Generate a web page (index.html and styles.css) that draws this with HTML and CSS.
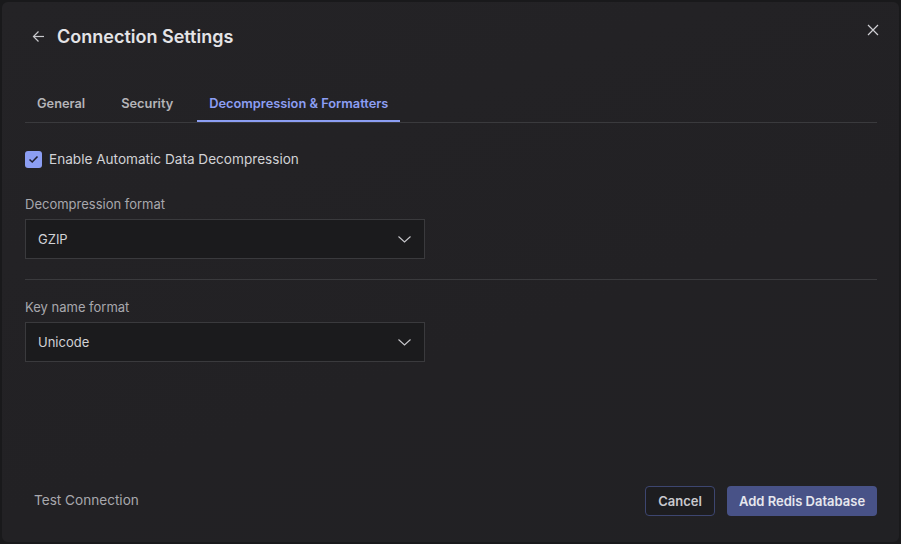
FILE: index.html
```html
<!DOCTYPE html>
<html lang="en">
<head>
    <meta charset="UTF-8">
    <meta name="viewport" content="width=device-width, initial-scale=1.0">
    <title>Connection Settings</title>
    <link rel="stylesheet" href="styles.css">
</head>
<body>
    <div class="panel">
        <!-- Header -->
        <div class="panel-header">
            <button class="icon-btn back-btn" aria-label="Back">
                <svg width="13" height="13" viewBox="0 0 13 13" fill="none" stroke="#c8c8cc" stroke-width="1.2">
                    <path d="M12 6.5H1.5"/>
                    <path d="M6.5 1.5L1.5 6.5L6.5 11.5"/>
                </svg>
            </button>
            <h1 class="title">Connection Settings</h1>
            <button class="icon-btn close-btn" aria-label="Close">
                <svg width="12" height="12" viewBox="0 0 12 12" fill="none" stroke="#d0d0d4" stroke-width="1.2">
                    <path d="M1 1L11 11M11 1L1 11"/>
                </svg>
            </button>
        </div>

        <!-- Tabs -->
        <div class="tabs">
            <a href="#" class="tab">General</a>
            <a href="#" class="tab">Security</a>
            <a href="#" class="tab active">Decompression &amp; Formatters</a>
        </div>

        <!-- Content -->
        <div class="panel-body">
            <label class="checkbox-row">
                <span class="checkbox">
                    <svg width="11" height="9" viewBox="0 0 11 9" fill="none" stroke="#1f2030" stroke-width="1.6">
                        <path d="M1.5 4.5L4.2 7L9.5 1.5"/>
                    </svg>
                </span>
                Enable Automatic Data Decompression
            </label>

            <div class="field">
                <div class="field-label">Decompression format</div>
                <div class="select">
                    <span>GZIP</span>
                    <svg class="chevron" width="13" height="7" viewBox="0 0 13 7" fill="none" stroke="#c8c8cc" stroke-width="1.1">
                        <path d="M0.5 0.5L6.5 6L12.5 0.5"/>
                    </svg>
                </div>
            </div>

            <div class="divider"></div>

            <div class="field">
                <div class="field-label">Key name format</div>
                <div class="select">
                    <span>Unicode</span>
                    <svg class="chevron" width="13" height="7" viewBox="0 0 13 7" fill="none" stroke="#c8c8cc" stroke-width="1.1">
                        <path d="M0.5 0.5L6.5 6L12.5 0.5"/>
                    </svg>
                </div>
            </div>
        </div>

        <!-- Footer -->
        <div class="panel-footer">
            <button class="link-btn">Test Connection</button>
            <div class="actions">
                <button class="btn btn-secondary">Cancel</button>
                <button class="btn btn-primary">Add Redis Database</button>
            </div>
        </div>
    </div>
</body>
</html>
```

FILE: styles.css
```css
:root {
    --page-bg: #19191b;
    --panel-bg: #232225;
    --text-primary: #e4e4e7;
    --text-body: #d2d2d6;
    --text-secondary: #a8a8ad;
    --accent: #8c9ef3;
    --border: #3a3a3d;
    --input-bg: #1b1b1d;
    --primary-btn: #485287;
}

* {
    box-sizing: border-box;
}

body {
    margin: 0;
    height: 100vh;
    background-color: var(--page-bg);
    font-family: Inter, "Noto Sans", sans-serif;
    color: var(--text-primary);
    padding: 2px;
}

.panel {
    height: 100%;
    background: linear-gradient(160deg, #242326 0%, #222124 60%, #212124 100%);
    border-radius: 6px;
    display: flex;
    flex-direction: column;
    padding: 23px 22px 26px 23px;
}

/* Header */
.panel-header {
    display: flex;
    align-items: center;
    height: 24px;
}

.icon-btn {
    background: none;
    border: none;
    padding: 0;
    cursor: pointer;
    display: flex;
    align-items: center;
}

.back-btn {
    margin-left: 7px;
    margin-right: 12px;
    margin-top: -2px;
}

.title {
    margin: 0;
    font-size: 18px;
    font-weight: 600;
    line-height: 24px;
    color: var(--text-primary);
    flex: 1;
}

.close-btn {
    align-self: flex-start;
    margin-top: -1px;
    margin-right: -2px;
}

/* Tabs */
.tabs {
    display: flex;
    gap: 12px;
    margin-top: 39px;
    border-bottom: 1px solid var(--border);
}

.tab {
    padding: 7px 12px;
    font-size: 12.8px;
    font-weight: 600;
    line-height: 18px;
    color: #b4b4b8;
    text-decoration: none;
    border-bottom: 2px solid transparent;
}

.tab.active {
    color: var(--accent);
    border-bottom-color: var(--accent);
}

/* Body */
.panel-body {
    flex: 1;
}

.checkbox-row {
    display: flex;
    align-items: center;
    gap: 7px;
    margin-top: 28px;
    font-size: 13.6px;
    line-height: 17px;
    color: var(--text-body);
}

.checkbox {
    width: 17px;
    height: 17px;
    border-radius: 3px;
    background-color: var(--accent);
    display: flex;
    align-items: center;
    justify-content: center;
}

.field {
    margin-top: 28px;
}

.divider + .field {
    margin-top: 19px;
}

.field-label {
    font-size: 13px;
    line-height: 16px;
    color: var(--text-secondary);
    margin-bottom: 7px;
}

.select {
    width: 400px;
    height: 40px;
    background-color: var(--input-bg);
    border: 1px solid var(--border);
    display: flex;
    align-items: center;
    justify-content: space-between;
    padding: 0 13px 0 12px;
    font-size: 13px;
    color: var(--text-body);
}

.chevron {
    margin-top: 1px;
}

.divider {
    height: 1px;
    background-color: var(--border);
    margin-top: 20px;
}

/* Footer */
.panel-footer {
    display: flex;
    align-items: center;
    justify-content: space-between;
}

.link-btn {
    background: none;
    border: none;
    padding: 0 0 0 9px;
    margin-bottom: 2px;
    font-family: inherit;
    font-size: 13.6px;
    color: var(--text-secondary);
    cursor: pointer;
}

.actions {
    display: flex;
    gap: 12px;
}

.btn {
    height: 30px;
    border-radius: 4px;
    font-family: inherit;
    font-size: 13px;
    font-weight: 600;
    cursor: pointer;
}

.btn-secondary {
    width: 70px;
    background-color: #1d1d20;
    border: 1px solid #3d4670;
    color: #c9c9ce;
}

.btn-primary {
    width: 150px;
    background-color: var(--primary-btn);
    border: none;
    color: #e6e7ee;
}
```
